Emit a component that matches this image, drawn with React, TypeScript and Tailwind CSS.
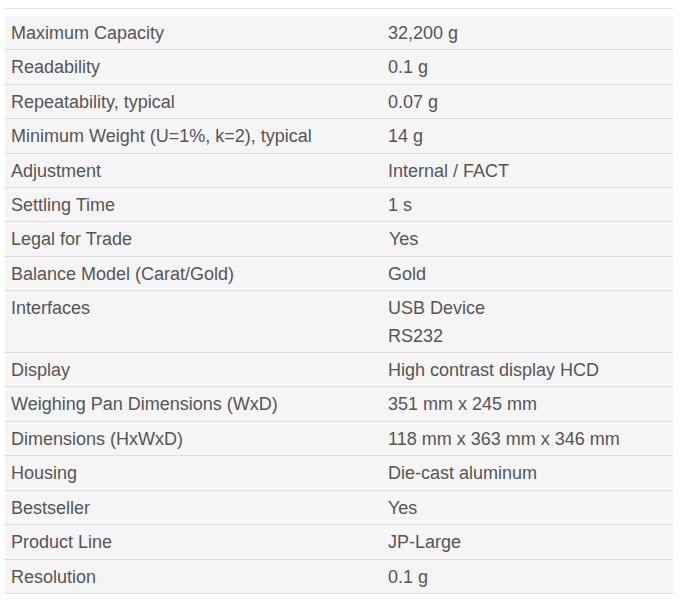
const specs: [string, string[], boolean?][] = [
  ["Maximum Capacity", ["32,200 g"]],
  ["Readability", ["0.1 g"]],
  ["Repeatability, typical", ["0.07 g"]],
  ["Minimum Weight (U=1%, k=2), typical", ["14 g"]],
  ["Adjustment", ["Internal / FACT"]],
  ["Settling Time", ["1 s"]],
  ["Legal for Trade", ["Yes"], true],
  ["Balance Model (Carat/Gold)", ["Gold"]],
  ["Interfaces", ["USB Device", "RS232"]],
  ["Display", ["High contrast display HCD"]],
  ["Weighing Pan Dimensions (WxD)", ["351 mm x 245 mm"]],
  ["Dimensions (HxWxD)", ["118 mm x 363 mm x 346 mm"]],
  ["Housing", ["Die-cast aluminum"]],
  ["Bestseller", ["Yes"]],
  ["Product Line", ["JP-Large"]],
  ["Resolution", ["0.1 g"]],
];

export default function App() {
  return (
    <div className="w-[686px] h-[600px] bg-white pt-[8px] font-['Liberation_Sans',Arial,sans-serif]">
      <div className="mx-[5px] w-[668px] border-t border-[#e6e6e6] pt-[7px]">
        <div className="bg-[#f5f5f5] text-[18px] text-[#555555]">
          {specs.map(([label, values, shifted]) => (
            <div key={label} className="flex border-b border-[#dedede]">
              <div className="w-[377px] shrink-0 pl-[6px] pt-[4px] pb-[2px] leading-[27.4px]">{label}</div>
              <div className={`${shifted ? "pl-[7px]" : "pl-[6px]"} pt-[4px] pb-[2px] leading-[27.4px]`}>
                {values.map((v) => (
                  <div key={v}>{v}</div>
                ))}
              </div>
            </div>
          ))}
        </div>
      </div>
    </div>
  );
}
